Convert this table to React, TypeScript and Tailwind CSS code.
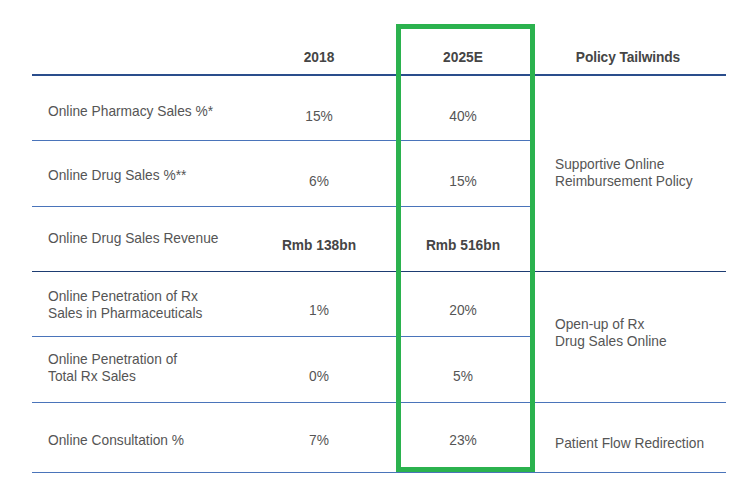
const rows = [
  { label: ['Online Pharmacy Sales %*'], v2018: '15%', v2025: '40%', lt: 'pt-[27px]', vt: 'pt-[32px]', line: 'border-[#4a74ba]' },
  { label: ['Online Drug Sales %**'], v2018: '6%', v2025: '15%', lt: 'pt-[26px]', vt: 'pt-[32px]', line: 'border-[#4a74ba]' },
  { label: ['Online Drug Sales Revenue'], v2018: 'Rmb 138bn', v2025: 'Rmb 516bn', lt: 'pt-[23px]', vt: 'pt-[30px]', bold: true, line: 'border-[#1d3c72]' },
  { label: ['Online Penetration of Rx', 'Sales in Pharmaceuticals'], v2018: '1%', v2025: '20%', lt: 'pt-[16px]', vt: 'pt-[30px]', line: 'border-[#4a74ba]' },
  { label: ['Online Penetration of', 'Total Rx Sales'], v2018: '0%', v2025: '5%', lt: 'pt-[14px]', vt: 'pt-[31px]', line: 'border-[#4a74ba]' },
  { label: ['Online Consultation %'], v2018: '7%', v2025: '23%', lt: 'pt-[29px]', vt: 'pt-[29px]', line: 'border-[#4a74ba]' },
]

export default function App() {
  return (
    <div
      className="w-[748px] h-[496px] bg-white pl-[32px] text-[13.75px] leading-[17px] text-[#555555]"
      style={{ fontFamily: '"Liberation Sans", Arial, Helvetica, sans-serif' }}
    >
      <div className="relative grid w-[694px] grid-cols-[210px_154px_134px_196px] grid-rows-[76px_65px_66px_65px_65px_66px_70px]">
        {/* header */}
        <div className="border-b-2 border-[#2a4d8c]" />
        <div className="flex items-end justify-center border-b-2 border-[#2a4d8c] pb-[8px] font-bold text-[#454545]">2018</div>
        <div className="flex items-end justify-center border-b-2 border-[#2a4d8c] pb-[8px] font-bold text-[#454545]">2025E</div>
        <div className="flex items-end justify-center border-b-2 border-[#2a4d8c] pb-[8px] font-bold tracking-[-0.1px] text-[#454545]">
          Policy Tailwinds
        </div>

        {rows.map((r, i) => (
          <div key={i} className="contents">
            <div className={`col-start-1 border-b pl-4 ${r.line} ${r.lt}`}>
              {r.label.map((l) => (
                <div key={l}>{l}</div>
              ))}
            </div>
            <div className={`border-b text-center ${r.line} ${r.vt} ${r.bold ? 'font-bold text-[#454545]' : ''}`}>
              {r.v2018}
            </div>
            <div className={`border-b text-center ${r.line} ${r.vt} ${r.bold ? 'font-bold text-[#454545]' : ''}`}>
              {r.v2025}
            </div>
          </div>
        ))}

        <div className="col-start-4 row-start-2 row-span-3 border-b border-[#1d3c72] pl-[25px] pt-[80px]">
          <div>Supportive Online</div>
          <div>Reimbursement Policy</div>
        </div>
        <div className="col-start-4 row-start-5 row-span-2 border-b border-[#4a74ba] pl-[25px] pt-[44px]">
          <div>Open-up of Rx</div>
          <div>Drug Sales Online</div>
        </div>
        <div className="col-start-4 row-start-7 border-b border-[#4a74ba] pl-[25px] pt-[32px]">
          Patient Flow Redirection
        </div>

        {/* highlight box */}
        <div className="pointer-events-none absolute left-[364px] top-[24px] h-[448px] w-[139px] border-[5px] border-[#2bb24e]" />
      </div>
    </div>
  )
}
